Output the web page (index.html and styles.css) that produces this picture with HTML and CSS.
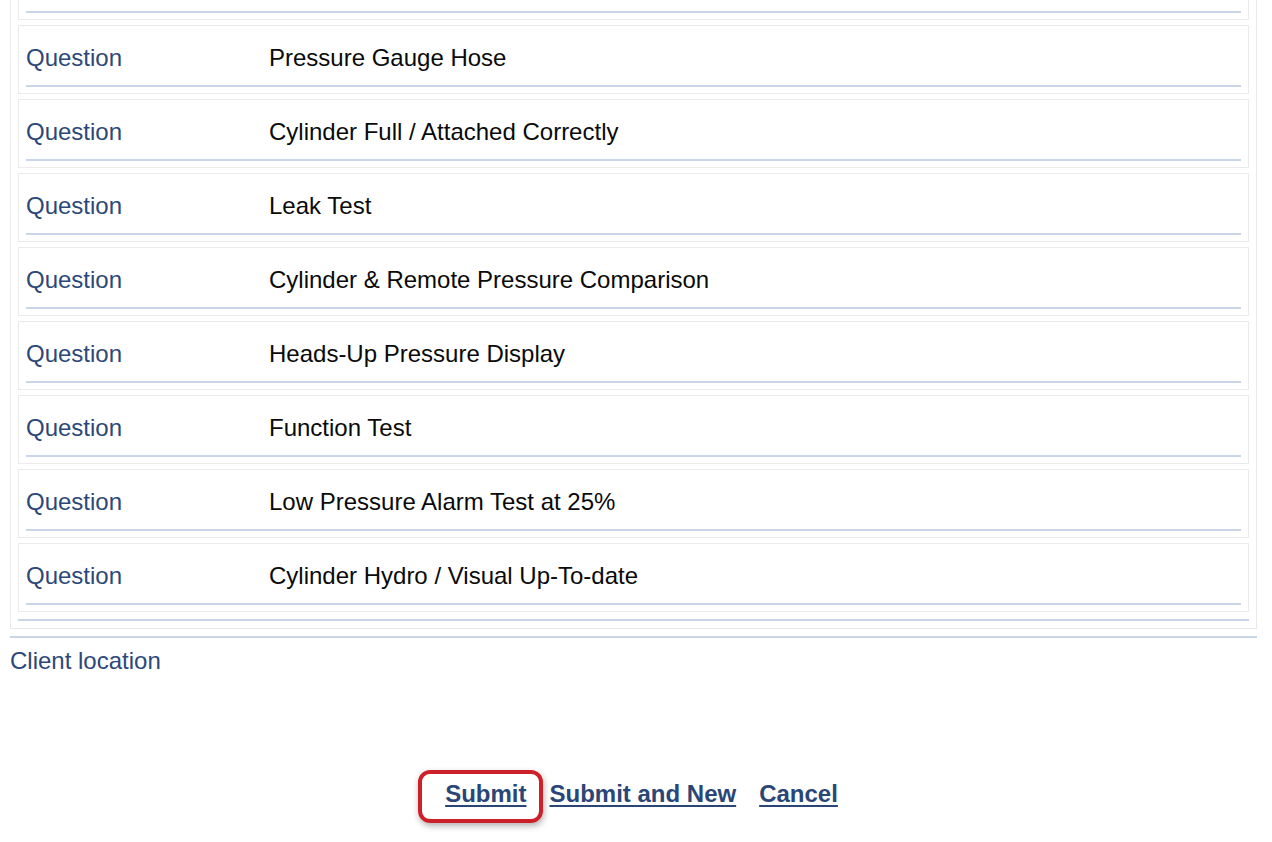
FILE: index.html
```html
<!DOCTYPE html>
<html>
<head>
<meta charset="utf-8">
<title>Inspection</title>
<link rel="stylesheet" href="styles.css">
</head>
<body>
<div class="page">
  <div class="outer">
    <div class="section">
      <div class="rows">
        <div class="row"><div class="field field-stub"></div></div>
        <div class="row"><div class="field"><span class="label">Question</span><span class="value">Pressure Gauge Hose</span></div></div>
        <div class="row"><div class="field"><span class="label">Question</span><span class="value">Cylinder Full / Attached Correctly</span></div></div>
        <div class="row"><div class="field"><span class="label">Question</span><span class="value">Leak Test</span></div></div>
        <div class="row"><div class="field"><span class="label">Question</span><span class="value">Cylinder &amp; Remote Pressure Comparison</span></div></div>
        <div class="row"><div class="field"><span class="label">Question</span><span class="value">Heads-Up Pressure Display</span></div></div>
        <div class="row"><div class="field"><span class="label">Question</span><span class="value">Function Test</span></div></div>
        <div class="row"><div class="field"><span class="label">Question</span><span class="value">Low Pressure Alarm Test at 25%</span></div></div>
        <div class="row"><div class="field"><span class="label">Question</span><span class="value">Cylinder Hydro / Visual Up-To-date</span></div></div>
      </div>
    </div>
  </div>
  <div class="client">Client location</div>
  <div class="actions">
    <a href="#" class="action action-primary">Submit<span class="highlight"></span></a>
    <a href="#" class="action">Submit and New</a>
    <a href="#" class="action">Cancel</a>
  </div>
</div>
</body>
</html>
```

FILE: styles.css
```css
html, body {
  margin: 0;
  padding: 0;
  background: #ffffff;
}

body {
  font-family: "Liberation Sans", Arial, Helvetica, sans-serif;
  font-size: 24px;
  line-height: 28px;
  color: #000000;
  min-height: 842px;
}

.page {
  padding: 0 15px 0 10px;
  margin-top: -49px;
}

.outer {
  padding-bottom: 7px;
  border-bottom: 2px solid #c9d6e7;
}

.section {
  border-left: 1px solid #e9e9e9;
  border-right: 1px solid #e9e9e9;
  border-bottom: 1px solid #e9e9e9;
  padding: 0 7px 7px 7px;
}

.rows {
  padding-bottom: 2px;
  border-bottom: 2px solid #c9d6e7;
}

.row {
  border: 1px solid #ebebeb;
  padding: 0 7px 6px 7px;
  margin-bottom: 5px;
}

.field {
  display: flex;
  align-items: baseline;
  padding: 18px 0 13px 0;
  border-bottom: 2px solid #c9d6e7;
}

.field-stub {
  height: 28px;
}

.label {
  width: 243px;
  flex: none;
  color: #2c4878;
}

.value {
  color: #0a0a0a;
}

.client {
  margin-top: 9px;
  color: #2c4878;
}

.actions {
  display: flex;
  justify-content: center;
  gap: 23px;
  margin-top: 105px;
  padding: 0 0 30px 16px;
}

.action {
  position: relative;
  font-weight: bold;
  color: #2a4677;
  text-decoration: underline;
  text-decoration-thickness: 2px;
  text-underline-offset: 3px;
}

.highlight {
  position: absolute;
  left: -27px;
  top: -10px;
  width: 125px;
  height: 53px;
  box-sizing: border-box;
  border: 4px solid #cc2129;
  border-radius: 12px;
  box-shadow: 1px 3px 6px rgba(0, 0, 0, 0.3);
  pointer-events: none;
}
```
